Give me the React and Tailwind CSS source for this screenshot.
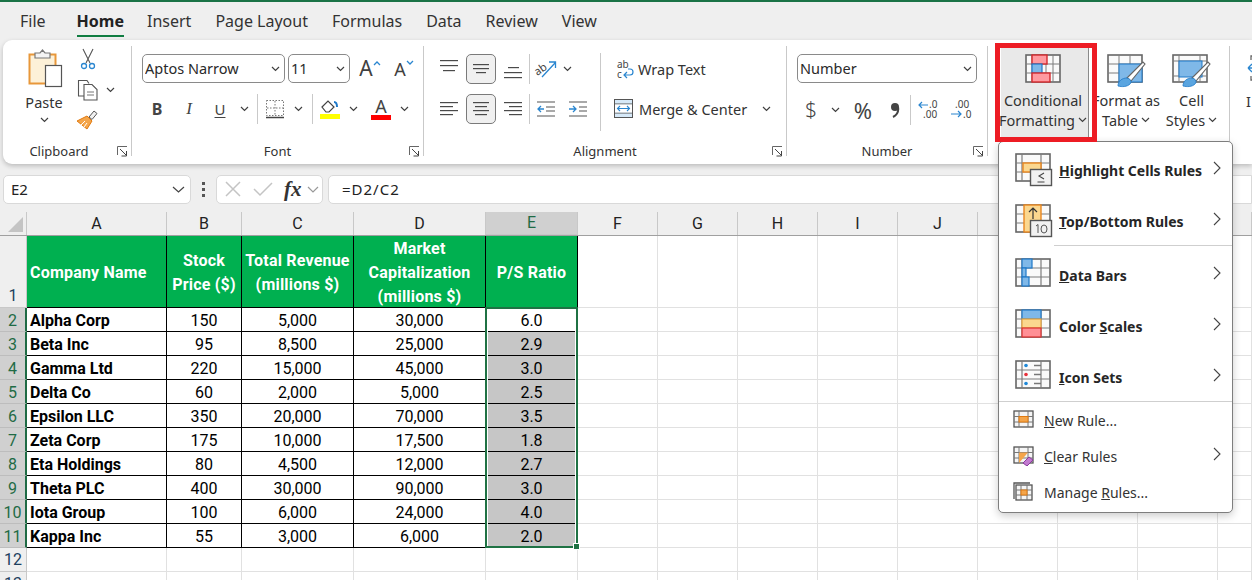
import React from 'react';

const SANS = 'font-["Noto_Sans"]';
const ROW_GRID = 'grid grid-cols-[27px_140px_75px_112px_132px_92px_80px_80px_80px_80px_80px_80px_80px_80px_34px]';

const rows = [
  ['Alpha Corp', '150', '5,000', '30,000', '6.0'],
  ['Beta Inc', '95', '8,500', '25,000', '2.9'],
  ['Gamma Ltd', '220', '15,000', '45,000', '3.0'],
  ['Delta Co', '60', '2,000', '5,000', '2.5'],
  ['Epsilon LLC', '350', '20,000', '70,000', '3.5'],
  ['Zeta Corp', '175', '10,000', '17,500', '1.8'],
  ['Eta Holdings', '80', '4,500', '12,000', '2.7'],
  ['Theta PLC', '400', '30,000', '90,000', '3.0'],
  ['Iota Group', '100', '6,000', '24,000', '4.0'],
  ['Kappa Inc', '55', '3,000', '6,000', '2.0'],
];

function Chevron({ className = '' }) {
  return (
    <svg width="9" height="6" viewBox="0 0 9 6" className={className}>
      <path d="M1 1l3.500 3.500L8 1" fill="none" stroke="#404040" strokeWidth="1.200" />
    </svg>
  );
}

function Launcher() {
  return (
    <svg width="11" height="11" viewBox="0 0 11 11">
      <path d="M.5 9V.5H10" fill="none" stroke="#666" />
      <path d="M3 3l6 6M9.500 5v5h-5" fill="none" stroke="#444" />
    </svg>
  );
}

function Lines({ widths }) {
  return (
    <svg width="20" height="20" viewBox="0 0 20 20">
      {widths.map(([x, w, y], i) => (
        <rect key={i} x={x} y={y} width={w} height="1.200" fill="#4a4a4a" />
      ))}
    </svg>
  );
}

function GridIcon({ children }) {
  return (
    <svg width="38" height="34" viewBox="0 0 38 34" className="shrink-0">
      {children}
    </svg>
  );
}

function BaseGrid({ cols = [7, 26], rowsY = [10, 19] }) {
  return (
    <>
      <rect x="1" y="1" width="34" height="27" fill="#fafafa" stroke="#666" strokeWidth="1.600" />
      {cols.map((x) => (
        <path key={x} d={`M${x} 1v27`} stroke="#7c7c7c" strokeWidth="1.200" />
      ))}
      {rowsY.map((y) => (
        <path key={y} d={`M1 ${y}h34`} stroke="#7c7c7c" strokeWidth="1.200" />
      ))}
    </>
  );
}

function OverlayBox({ children }) {
  return (
    <>
      <rect x="15.500" y="16.500" width="21" height="16" fill="#f1f1f1" stroke="#555" strokeWidth="1.400" />
      {children}
    </>
  );
}

function HighlightIcon() {
  return (
    <GridIcon>
      <BaseGrid />
      <rect x="8" y="10" width="18" height="9" fill="#fbd78f" stroke="#e8861e" strokeWidth="1.400" />
      <OverlayBox>
        <path d="M29 20l-5 3 5 3M22.500 29h7" fill="none" stroke="#444" strokeWidth="1.100" />
      </OverlayBox>
    </GridIcon>
  );
}

function TopBottomIcon() {
  return (
    <GridIcon>
      <rect x="1" y="1" width="34" height="27" fill="#fafafa" stroke="#666" strokeWidth="1.600" />
      <path d="M1 10h34M1 19h34" stroke="#7c7c7c" strokeWidth="1.200" />
      <rect x="9" y="1" width="17" height="27" fill="#fbd78f" stroke="#e8861e" strokeWidth="1.400" />
      <path d="M18 15V4M14 8l4-4 4 4" fill="none" stroke="#333" strokeWidth="1.200" />
      <OverlayBox>
        <path d="M21 22l2-1.500v8.500" fill="none" stroke="#555" strokeWidth="1" />
        <ellipse cx="29" cy="25" rx="3" ry="4" fill="none" stroke="#555" strokeWidth="1" />
      </OverlayBox>
    </GridIcon>
  );
}

function DataBarsIcon() {
  return (
    <GridIcon>
      <BaseGrid />
      <rect x="7" y="1" width="10" height="9" fill="#7fb8e8" stroke="#1e78c8" strokeWidth="1.200" />
      <rect x="7" y="10" width="4" height="9" fill="#7fb8e8" stroke="#1e78c8" strokeWidth="1.200" />
      <rect x="7" y="19" width="7" height="9" fill="#7fb8e8" stroke="#1e78c8" strokeWidth="1.200" />
    </GridIcon>
  );
}

function ColorScalesIcon() {
  return (
    <GridIcon>
      <BaseGrid />
      <rect x="7" y="1" width="19" height="9" fill="#7fb8e8" stroke="#1e78c8" strokeWidth="1.200" />
      <rect x="7" y="10" width="19" height="9" fill="#fbd78f" stroke="#e8a33e" strokeWidth="1.200" />
      <rect x="7" y="19" width="19" height="9" fill="#ff8f95" stroke="#d9302f" strokeWidth="1.200" />
    </GridIcon>
  );
}

function IconSetsIcon() {
  return (
    <GridIcon>
      <BaseGrid />
      <circle cx="11" cy="5.500" r="1.800" fill="#1e88d8" />
      <circle cx="11" cy="14.500" r="1.800" fill="#e8303a" />
      <circle cx="11" cy="23.500" r="1.800" fill="#1e88d8" />
      <path d="M19 5.500h7M19 14.500h7M19 23.500h7" stroke="#777" strokeWidth="1.400" />
    </GridIcon>
  );
}

function SmallGrid({ children, shadow }) {
  return (
    <svg width="21" height="20" viewBox="0 0 21 20" className="shrink-0">
      {shadow && <path d="M1 17V1h16" fill="none" stroke="#555" strokeWidth="1.300" />}
      <rect x={shadow ? 3 : 1} y={shadow ? 3 : 1} width={shadow ? 16 : 19} height={shadow ? 15 : 16} fill="#f5f5f5" stroke="#555" strokeWidth="1.300" />
      <path d={shadow ? 'M3 8h16M3 13h16M8 3v15M14 3v15' : 'M1 6.500h19M1 12h19M6 1v16M15 1v16'} stroke="#777" />
      {children}
    </svg>
  );
}

function CondFormatIcon() {
  return (
    <svg width="36" height="29" viewBox="0 0 36 29">
      <rect x="1" y="1" width="34" height="27" fill="#fafafa" stroke="#666" strokeWidth="1.600" />
      <path d="M7 1v27M28 1v27M1 10h34M1 19h34M21 1v27" stroke="#7c7c7c" />
      <rect x="7" y="1" width="15" height="9" fill="#ff9aa0" stroke="#d42a2e" strokeWidth="1.400" />
      <rect x="7" y="10" width="10" height="9" fill="#7fb8e8" stroke="#1e78c8" strokeWidth="1.200" />
      <rect x="7" y="19" width="18" height="9" fill="#ff9aa0" stroke="#d42a2e" strokeWidth="1.400" />
    </svg>
  );
}

function Brush() {
  return (
    <>
      <path d="M20 24L36 8l2 2-14 17z" fill="#fff" stroke="#666" strokeWidth="1.100" />
      <path d="M11 32c0-5 4-8 9-8 4 1 5 4 3 6-3 3-8 3-12 2z" fill="#5aa5e0" stroke="#1e78c8" strokeWidth=".8" />
    </>
  );
}

function FormatTableIcon() {
  return (
    <svg width="40" height="34" viewBox="0 0 40 34" className="ml-[2px]">
      <rect x="1" y="1" width="34" height="27" fill="#fafafa" stroke="#666" strokeWidth="1.600" />
      <path d="M12 1v27M23 1v27M1 10h34M1 19h34" stroke="#7c7c7c" />
      <rect x="12" y="10" width="23" height="18" fill="#7fb8e8" stroke="#1e78c8" />
      <Brush />
    </svg>
  );
}

function CellStylesIcon() {
  return (
    <svg width="40" height="34" viewBox="0 0 40 34">
      <rect x="1" y="1" width="34" height="27" fill="#fafafa" stroke="#666" strokeWidth="1.600" />
      <path d="M7 1v27M28 1v27M1 7h34M1 22h34" stroke="#7c7c7c" />
      <rect x="7" y="7" width="23" height="16" fill="#7fb8e8" stroke="#1e78c8" />
      <Brush />
    </svg>
  );
}

function PasteIcon() {
  return (
    <svg width="36" height="40" viewBox="0 0 36 40">
      <rect x="1.500" y="5.500" width="26" height="29" fill="#fdf1d8" stroke="#e8973a" strokeWidth="2" />
      <path d="M7 9V4h5l2.500-3 2.500 3h5v5z" fill="#f4f4f4" stroke="#777" strokeWidth="1.200" />
      <rect x="17.500" y="16.500" width="16" height="21" fill="#fff" stroke="#555" strokeWidth="1.200" />
    </svg>
  );
}

function Scissors() {
  return (
    <svg width="16" height="22" viewBox="0 0 16 22">
      <path d="M3 1l7 14M13 1L6 15" fill="none" stroke="#555" strokeWidth="1.100" />
      <circle cx="4" cy="18" r="2.500" fill="none" stroke="#2a86d0" strokeWidth="1.300" />
      <circle cx="12" cy="18" r="2.500" fill="none" stroke="#2a86d0" strokeWidth="1.300" />
    </svg>
  );
}

function CopyIcon() {
  return (
    <svg width="22" height="22" viewBox="0 0 22 22">
      <path d="M7 17H1.500V1.500H10l2 3" fill="#fff" stroke="#555" strokeWidth="1.100" />
      <path d="M7 5.500h8l5 5v10.500H7z" fill="#fff" stroke="#555" strokeWidth="1.100" />
      <path d="M10 13h7M10 16h7" stroke="#777" />
    </svg>
  );
}

function FormatPainter() {
  return (
    <svg width="22" height="20" viewBox="0 0 22 20">
      <path d="M13 7l5-6 3 2.500-5 6z" fill="#f0f0f0" stroke="#555" />
      <path d="M1 11l10-5 5 5-5 8z" fill="#f4a54a" stroke="#e07a10" />
      <path d="M5 15l4-4M8 17l3-4" stroke="#fff" />
    </svg>
  );
}

function Slot({ w, children }) {
  return <div className={`flex items-center justify-center shrink-0 ${w}`}>{children}</div>;
}

function Divider() {
  return <div className="w-px h-[30px] bg-[#c9c9c9] shrink-0" />;
}

function Select({ label, w }) {
  return (
    <div className={`flex items-center justify-between h-[29px] border border-[#8a8a8a] rounded-[5px] pl-[2px] pr-[4px] text-[14.5px] text-[#2a2a2a] ${w}`}>
      <span className="truncate pt-[1px]">{label}</span>
      <Chevron />
    </div>
  );
}

function Group({ w, label, launcher = true, children }) {
  return (
    <div className={`flex flex-col h-[110px] shrink-0 border-r border-[#c9c9c9] ${w}`}>
      <div className="h-[100px]">{children}</div>
      <div className="relative h-[10px] pt-[2px] flex items-center justify-center text-[13px] text-[#333]">
        {label}
        {launcher && (
          <span className="absolute right-[3px] top-[0px]">
            <Launcher />
          </span>
        )}
      </div>
    </div>
  );
}

function ActiveBox({ children }) {
  return (
    <div className="w-[30px] h-[30px] flex items-center justify-center rounded-[5px] border border-[#7a7a7a] bg-[#f0f0f0]">
      {children}
    </div>
  );
}

function FontGroup() {
  return (
    <Group w="w-[292px]" label="Font">
      <div className="flex items-center mt-[8px] pl-[10px]">
        <Select label="Aptos Narrow" w="w-[143px]" />
        <div className="w-[3px]" />
        <Select label="11" w="w-[62px]" />
        <Slot w="w-[40px]">
          <span className="text-[21px] text-[#404040] leading-none">A</span>
          <svg width="8" height="6" viewBox="0 0 8 6" className="-mt-[12px]"><path d="M1 5l3-3 3 3" fill="none" stroke="#2a86d0" strokeWidth="1.300" /></svg>
        </Slot>
        <Slot w="w-[28px]">
          <span className="text-[18px] text-[#404040] leading-none">A</span>
          <svg width="8" height="6" viewBox="0 0 8 6" className="-mt-[12px]"><path d="M1 1l3 3 3-3" fill="none" stroke="#2a86d0" strokeWidth="1.300" /></svg>
        </Slot>
      </div>
      <div className="flex items-center mt-[11px] pl-[10px] h-[30px]">
        <Slot w="w-[30px]"><span className="text-[16px] font-bold text-[#444]">B</span></Slot>
        <Slot w="w-[34px]"><span className="text-[17px] italic text-[#444] font-['Liberation_Serif']">I</span></Slot>
        <Slot w="w-[28px]">
          <span className="text-[15px] text-[#444] underline underline-offset-2">U</span>
        </Slot>
        <Slot w="w-[20px]"><Chevron /></Slot>
        <div className="w-[3px]" />
        <Divider />
        <Slot w="w-[33px]">
          <svg width="20" height="20" viewBox="0 0 20 20">
            <rect x="1.500" y="1.500" width="17" height="15" fill="none" stroke="#777" strokeDasharray="1.500 1.500" />
            <path d="M10 2v14M2 9h16" stroke="#777" strokeDasharray="1.500 1.500" />
            <path d="M1 18.500h18" stroke="#444" strokeWidth="1.500" />
          </svg>
        </Slot>
        <Slot w="w-[15px]"><Chevron /></Slot>
        <Slot w="w-[13px]"><Divider /></Slot>
        <Slot w="w-[22px]">
          <svg width="22" height="22" viewBox="0 0 22 22">
            <path d="M3 9l6-6 6 6-5 5H7z" fill="none" stroke="#444" strokeWidth="1.200" />
            <path d="M15 4c2 0 3 2 3 5" fill="none" stroke="#1e78c8" strokeWidth="2" />
            <rect x="1" y="16" width="20" height="5" fill="#ffff00" />
          </svg>
        </Slot>
        <Slot w="w-[24px]"><Chevron /></Slot>
        <Slot w="w-[32px]">
          <div className="flex flex-col items-center">
            <span className="text-[18px] leading-[17px] text-[#444]">A</span>
            <div className="w-[20px] h-[5px] bg-[#ff0000]" />
          </div>
        </Slot>
        <Slot w="w-[14px]"><Chevron className="shrink-0" /></Slot>
      </div>
    </Group>
  );
}

function AlignmentGroup() {
  return (
    <Group w="w-[363px]" label="Alignment">
      <div className="flex pl-[9px]">
        <div>
          <div className="flex items-center mt-[8px] h-[30px]">
            <Slot w="w-[32px]"><Lines widths={[[1, 18, 1], [1, 18, 6], [4, 12, 11]]} /></Slot>
            <Slot w="w-[32px]"><ActiveBox><Lines widths={[[2, 16, 5], [2, 16, 9], [5, 10, 13]]} /></ActiveBox></Slot>
            <Slot w="w-[32px]"><Lines widths={[[5, 11, 8], [1, 18, 13], [1, 18, 18]]} /></Slot>
            <Divider />
            <Slot w="w-[32px]">
              <svg width="22" height="20" viewBox="0 0 22 20" className="overflow-visible">
                <text x="0" y="14" fontSize="11" fill="#444" transform="rotate(-35 6 12)" fontFamily="Noto Sans">ab</text>
                <path d="M7 18L20 4M14 3h6.500v6" fill="none" stroke="#2a86d0" strokeWidth="1.300" />
              </svg>
            </Slot>
            <Slot w="w-[10px]"><Chevron className="shrink-0" /></Slot>
          </div>
          <div className="flex items-center mt-[10px] h-[30px]">
            <Slot w="w-[32px]"><Lines widths={[[1, 18, 3], [1, 13, 7], [1, 18, 11], [1, 13, 15]]} /></Slot>
            <Slot w="w-[32px]"><ActiveBox><Lines widths={[[2, 16, 3], [4, 12, 7], [2, 16, 11], [4, 12, 15]]} /></ActiveBox></Slot>
            <Slot w="w-[32px]"><Lines widths={[[1, 18, 3], [6, 13, 7], [1, 18, 11], [6, 13, 15]]} /></Slot>
            <Divider />
            <Slot w="w-[32px]">
              <svg width="20" height="20" viewBox="0 0 20 20">
                <path d="M1 3h18M10 8h9M10 12h9M1 17h18" stroke="#555" strokeWidth="1.200" />
                <path d="M8 10H2M5 7l-3 3 3 3" fill="none" stroke="#2a86d0" strokeWidth="1.300" />
              </svg>
            </Slot>
            <Slot w="w-[32px]">
              <svg width="20" height="20" viewBox="0 0 20 20">
                <path d="M1 3h18M11 8h8M11 12h8M1 17h18" stroke="#555" strokeWidth="1.200" />
                <path d="M1 10h7M5 7l3 3-3 3" fill="none" stroke="#2a86d0" strokeWidth="1.300" />
              </svg>
            </Slot>
          </div>
        </div>
        <div className="w-px h-[78px] bg-[#c9c9c9] ml-[6px] mt-[7px] shrink-0" />
        <div className="pl-[13px] text-[14.5px] text-[#333]">
          <div className="flex items-center gap-[3px] ml-[2px] mt-[8px] h-[30px]">
            <svg width="19" height="20" viewBox="0 0 19 20" className="overflow-visible">
              <text x="1" y="9" fontSize="10" fill="#444" fontFamily="Noto Sans">ab</text>
              <text x="1" y="19" fontSize="10" fill="#444" fontFamily="Noto Sans">c</text>
              <path d="M8 16h6c4 0 4-6 0-6h-2M11 13l-3 3 3 3" fill="none" stroke="#2a86d0" strokeWidth="1.200" />
            </svg>
            <span className="pt-[2px]">Wrap Text</span>
          </div>
          <div className="flex items-center mt-[10px] h-[30px]">
            <svg width="20" height="20" viewBox="0 0 20 20">
              <rect x=".5" y=".5" width="18" height="18" fill="#d6e9f8" stroke="#555" />
              <path d="M.5 5h18M.5 14h18" stroke="#555" />
              <rect x="1" y="5.500" width="17" height="8" fill="#fff" />
              <path d="M3 9.500h13M6 7L3.500 9.500 6 12M13 7l2.500 2.500L13 12" fill="none" stroke="#2a86d0" strokeWidth="1.100" />
            </svg>
            <span className="ml-[5px] pt-[2px]">Merge &amp; Center</span>
            <Chevron className="ml-[15px]" />
          </div>
        </div>
      </div>
    </Group>
  );
}

function NumberGroup() {
  return (
    <Group w="w-[201px]" label="Number">
      <div className="mt-[8px] pl-[10px]">
        <Select label="Number" w="w-[180px]" />
      </div>
      <div className="flex items-center mt-[12px] pl-[10px] h-[30px]">
        <Slot w="w-[28px]"><span className="text-[21px] font-light text-[#444]">$</span></Slot>
        <Slot w="w-[20px]"><Chevron /></Slot>
        <Slot w="w-[36px]"><span className="text-[22px] text-[#444]">%</span></Slot>
        <Slot w="w-[28px]">
          <svg width="10" height="16" viewBox="0 0 10 16">
            <circle cx="5" cy="5" r="4" fill="#444" />
            <path d="M8 5c1 5-1 8-5 10" fill="none" stroke="#444" strokeWidth="2" />
          </svg>
        </Slot>
        <Slot w="w-[3px]"><Divider /></Slot>
        <Slot w="w-[34px]">
          <svg width="22" height="20" viewBox="0 0 22 20" className="overflow-visible">
            <text x="11" y="8" fontSize="10" fill="#444" fontFamily="Noto Sans">.0</text>
            <text x="5" y="18" fontSize="10" fill="#444" fontFamily="Noto Sans">.00</text>
            <path d="M10 5H1M4 2L1 5l3 3" fill="none" stroke="#2a86d0" strokeWidth="1.200" />
          </svg>
        </Slot>
        <Slot w="w-[30px]">
          <svg width="22" height="20" viewBox="0 0 22 20" className="overflow-visible">
            <text x="5" y="8" fontSize="10" fill="#444" fontFamily="Noto Sans">.00</text>
            <text x="13" y="18" fontSize="10" fill="#444" fontFamily="Noto Sans">.0</text>
            <path d="M1 14h10M8 11l3 3-3 3" fill="none" stroke="#2a86d0" strokeWidth="1.200" />
          </svg>
        </Slot>
      </div>
    </Group>
  );
}

function LargeButton({ w, icon, line1, line2, active }) {
  return (
    <div className={`flex flex-col items-center h-[90px] pt-[6px] shrink-0 text-[14.5px] leading-[20px] text-[#333] whitespace-nowrap ${w} ${active ? 'bg-[#e9e9e9] border-r border-[#8a8a8a] pr-[3px]' : ''}`}>
      <div className="h-[36px] flex items-start">{icon}</div>
      <div>{line1}</div>
      <div className="flex items-center gap-[3px]">
        {line2}
        <Chevron />
      </div>
    </div>
  );
}

function MenuArrow() {
  return (
    <svg width="8" height="14" viewBox="0 0 8 14" className="absolute right-[11px] top-1/2 -mt-[9px]">
      <path d="M1 1l6 6-6 6" fill="none" stroke="#444" strokeWidth="1.100" />
    </svg>
  );
}

function MenuRow({ icon, children }) {
  return (
    <div className="relative flex items-center h-[48px] pl-[16px] gap-[6px] text-[14px] font-bold text-[#262626] leading-none">
      {icon}
      <span className="whitespace-nowrap mt-[1px]">{children}</span>
      <MenuArrow />
    </div>
  );
}

function SmallRow({ icon, arrow, children }) {
  return (
    <div className="relative flex items-center h-[36px] pl-[14px] gap-[10px] text-[14px] text-[#333]">
      {icon}
      <span className="whitespace-nowrap">{children}</span>
      {arrow && <MenuArrow />}
    </div>
  );
}

function ConditionalMenu() {
  return (
    <div className={`absolute left-[998px] top-[141px] w-[235px] h-[372px] bg-white border border-[#7e7e7e] rounded-[5px] shadow-[0_3px_8px_rgba(0,0,0,0.2)] pt-[4px] ${SANS}`}>
      <MenuRow icon={<HighlightIcon />}><u>H</u>ighlight Cells Rules</MenuRow>
      <div className="h-[3px]" />
      <MenuRow icon={<TopBottomIcon />}><u>T</u>op/Bottom Rules</MenuRow>
      <div className="h-px bg-[#cfcfcf] ml-[55px]" />
      <div className="h-[5px]" />
      <MenuRow icon={<DataBarsIcon />}><u>D</u>ata Bars</MenuRow>
      <div className="h-[3px]" />
      <MenuRow icon={<ColorScalesIcon />}>Color <u>S</u>cales</MenuRow>
      <div className="h-[3px]" />
      <MenuRow icon={<IconSetsIcon />}><u>I</u>con Sets</MenuRow>
      <div className="h-px bg-[#cfcfcf]" />
      <SmallRow icon={<SmallGrid><rect x="6" y="6.500" width="9" height="5.500" fill="#f4a54a" stroke="#e07a10" /></SmallGrid>}><u>N</u>ew Rule...</SmallRow>
      <SmallRow arrow icon={<SmallGrid><path d="M6 17V6.500h9z" fill="#f4a54a" /><path d="M10 17l6-6 4 3-6 6z" fill="#c27ad0" stroke="#8a3a9c" /></SmallGrid>}><u>C</u>lear Rules</SmallRow>
      <SmallRow icon={<SmallGrid shadow><rect x="8" y="8" width="6" height="5" fill="#f4a54a" stroke="#e07a10" /></SmallGrid>}>Manage <u>R</u>ules...</SmallRow>
    </div>
  );
}

function Ribbon() {
  return (
    <div className={`flex ml-[3px] h-[124px] pt-[6px] bg-white rounded-l-[9px] shadow-[0_2px_5px_rgba(0,0,0,0.22)] overflow-hidden ${SANS}`}>
      <Group w="w-[129px]" label={<span className="-ml-[16px]">Clipboard</span>}>
        <div className="flex">
          <div className="flex flex-col items-center w-[46px] ml-[18px] pt-[3px]">
            <div className="ml-[3px]"><PasteIcon /></div>
            <div className="text-[14.5px] leading-[20px] mt-[3px] text-[#333]">Paste</div>
            <Chevron className="mt-[5px]" />
          </div>
          <div className="flex flex-col ml-[9px] pt-[2px] gap-[9px]">
            <div className="pl-[4px]"><Scissors /></div>
            <div className="flex items-center gap-[7px] pl-[1px]"><CopyIcon /><Chevron /></div>
            <FormatPainter />
          </div>
        </div>
      </Group>
      <FontGroup />
      <AlignmentGroup />
      <NumberGroup />
      <Group w="w-[242px]" label="" launcher={false}>
        <div className="flex pl-[13px] pt-[2px]">
          <LargeButton w="w-[88px]" active icon={<CondFormatIcon />} line1="Conditional" line2="Formatting" />
          <LargeButton w="w-[74px]" icon={<FormatTableIcon />} line1="Format as" line2="Table" />
          <LargeButton w="w-[57px]" icon={<CellStylesIcon />} line1="Cell" line2="Styles" />
        </div>
      </Group>
      <div className="pl-[16px] pt-[8px] text-[14.5px] text-[#333]">
        <svg width="20" height="30" viewBox="0 0 20 30">
          <path d="M2 14l4-4M2 14l4 4M2 14h8" fill="none" stroke="#2a86d0" strokeWidth="1.300" />
          <path d="M5 6V2h15M5 22v4h15" fill="none" stroke="#666" strokeWidth="1.300" />
        </svg>
        <div className="mt-[7px]">I</div>
      </div>
    </div>
  );
}

function FormulaBar() {
  return (
    <div className={`flex items-center h-[48px] pb-[9px] pl-[3px] pt-[11px] ${SANS}`}>
      <div className="flex items-center justify-between w-[188px] h-[29px] bg-white border border-[#d9d9d9] rounded-[5px] pl-[7px] pr-[5px] text-[15px] text-[#222]">
        E2
        <svg width="13" height="7" viewBox="0 0 13 7"><path d="M1 1l5.500 5L12 1" fill="none" stroke="#444" strokeWidth="1.200" /></svg>
      </div>
      <div className="flex flex-col gap-[3px] ml-[11px] mr-[11px]">
        <div className="w-[3px] h-[3px] bg-[#555]" />
        <div className="w-[3px] h-[3px] bg-[#555]" />
        <div className="w-[3px] h-[3px] bg-[#555]" />
      </div>
      <div className="flex items-center w-[107px] h-[29px] bg-white border border-[#d9d9d9] rounded-[5px] pl-[7px]">
        <svg width="18" height="16" viewBox="0 0 18 16" className="mr-[11px]"><path d="M2 1l14 14M16 1L2 15" stroke="#c4c4c4" strokeWidth="1.500" /></svg>
        <svg width="20" height="16" viewBox="0 0 20 16" className="mr-[11px]"><path d="M1 8l6 6L19 2" fill="none" stroke="#c4c4c4" strokeWidth="1.500" /></svg>
        <span className="font-['Liberation_Serif'] italic font-bold text-[21px] text-[#333] leading-none">fx</span>
        <svg width="12" height="7" viewBox="0 0 12 7" className="ml-[5px]"><path d="M1 1l5 5 5-5" fill="none" stroke="#999" strokeWidth="1.200" /></svg>
      </div>
      <div className="flex-1 flex items-center h-[29px] ml-[5px] bg-white border border-[#d9d9d9] rounded-l-[5px] pl-[13px] text-[15px] tracking-[1px] text-[#222]">
        =D2/C2
      </div>
    </div>
  );
}

function ColumnHeaders() {
  // K onwards is hidden by the open menu
  const letters = ['A', 'B', 'C', 'D', 'E', 'F', 'G', 'H', 'I', 'J', '', '', '', ''];
  return (
    <div className={`${ROW_GRID} grid-rows-[23px] h-[24px] leading-[22px] bg-[#efefef] border-b border-[#a0a0a0]`}>
      <div className="flex items-end justify-end pr-[3px] pb-[3px] border-r border-[#c8c8c8]">
        <div className="w-0 h-0 border-l-[15px] border-l-transparent border-b-[15px] border-b-[#c4c4c4]" />
      </div>
      {letters.map((l, i) => (
        <div
          key={i}
          className={`flex items-center justify-center border-r border-[#c8c8c8] ${l === 'E' ? 'bg-[#d0d0d0] text-[#1f6b45] border-b border-[#1f6b45]' : 'text-[#222]'}`}
        >
          {l}
        </div>
      ))}
    </div>
  );
}

function EmptyCells({ n = 9 }) {
  return Array.from({ length: n }).map((_, i) => (
    <div key={i} className="border-r border-b border-[#e1e1e1]" />
  ));
}

function HeaderRow() {
  const cell = 'flex items-center justify-center text-center leading-[24px] pt-[2px] border-r border-b border-black bg-[#00b050] text-white font-bold tracking-[0.2px] whitespace-nowrap';
  return (
    <div className={`${ROW_GRID} grid-rows-[72px] h-[72px]`}>
      <div className="flex items-end justify-center leading-[22px] bg-[#efefef] text-[#1d3f5e] border-r border-b border-[#c8c8c8]">1</div>
      <div className={`${cell} !justify-start pl-[3px]`}>Company Name</div>
      <div className={cell}>Stock<br />Price ($)</div>
      <div className={cell}>Total Revenue<br />(millions $)</div>
      <div className={cell}>Market<br />Capitalization<br />(millions $)</div>
      <div className={cell}>P/S Ratio</div>
      <EmptyCells />
    </div>
  );
}

function DataRow({ row, index }) {
  const cell = 'flex items-center justify-center pt-[2px] border-r border-b border-black text-black';
  return (
    <div className={`${ROW_GRID} grid-rows-[24px] h-[24px] leading-[21px]`}>
      <div className="flex items-center justify-center pt-[2px] bg-[#d0d0d0] text-[#1f6b45] border-r-2 border-b border-r-[#1f6b45] border-b-[#bdbdbd]">{index + 2}</div>
      <div className={`${cell} !justify-start pl-[3px] font-bold whitespace-nowrap`}>{row[0]}</div>
      <div className={cell}>{row[1]}</div>
      <div className={cell}>{row[2]}</div>
      <div className={cell}>{row[3]}</div>
      <div className={`${cell} ${index === 0 ? 'bg-white' : 'bg-[#c6c6c6]'}`}>{row[4]}</div>
      <EmptyCells />
    </div>
  );
}

function Sheet() {
  return (
    <div className="relative font-['Roboto'] text-[16px] bg-white">
      <ColumnHeaders />
      <HeaderRow />
      {rows.map((row, i) => (
        <DataRow key={row[0]} row={row} index={i} />
      ))}
      <div className={`${ROW_GRID} grid-rows-[24px] h-[24px] leading-[22px]`}>
        <div className="flex items-center justify-center bg-[#efefef] text-[#1d3f5e] border-r border-b border-[#c8c8c8]">12</div>
        <EmptyCells n={14} />
      </div>
      <div className={`${ROW_GRID} grid-rows-[24px] h-[24px] leading-[22px]`}>
        <div className="flex items-center justify-center bg-[#efefef] text-[#1d3f5e] border-r border-[#c8c8c8]">13</div>
        <EmptyCells n={14} />
      </div>
      {/* selection over E2:E11 */}
      <div className="absolute left-[485px] top-[95px] w-[93px] h-[241px] border-2 border-[#1f7244]">
        <div className="h-full border-x border-white" />
        <div className="absolute -right-[3px] -bottom-[3px] w-[5px] h-[5px] bg-[#1f7244] outline outline-1 outline-white" />
      </div>
    </div>
  );
}

export default function App() {
  const tabs = ['File', 'Home', 'Insert', 'Page Layout', 'Formulas', 'Data', 'Review', 'View'];
  return (
    <div className="relative w-[1252px] h-[580px] overflow-hidden bg-[#efefef]">
      <div className="h-[2px] bg-[#1a7346]" />
      <div className={`flex h-[38px] pl-[8px] text-[16px] text-[#333] ${SANS}`}>
        {tabs.map((t) => (
          <div
            key={t}
            className={`relative flex items-center px-[12px] ${t === 'File' ? 'mr-[9px]' : ''} ${t === 'Home' ? 'font-bold text-[#222] !px-0 ml-[10px] mr-[11px]' : ''}`}
          >
            {t}
            {t === 'Home' && <div className="absolute left-0 right-0 bottom-[3px] h-[2px] bg-[#107c41]" />}
          </div>
        ))}
      </div>
      <Ribbon />
      <FormulaBar />
      <Sheet />
      <ConditionalMenu />
      {/* red annotation box */}
      <div className="absolute left-[995px] top-[43px] w-[102px] h-[99px] border-[5px] border-[#ed1c24]" />
    </div>
  );
}
